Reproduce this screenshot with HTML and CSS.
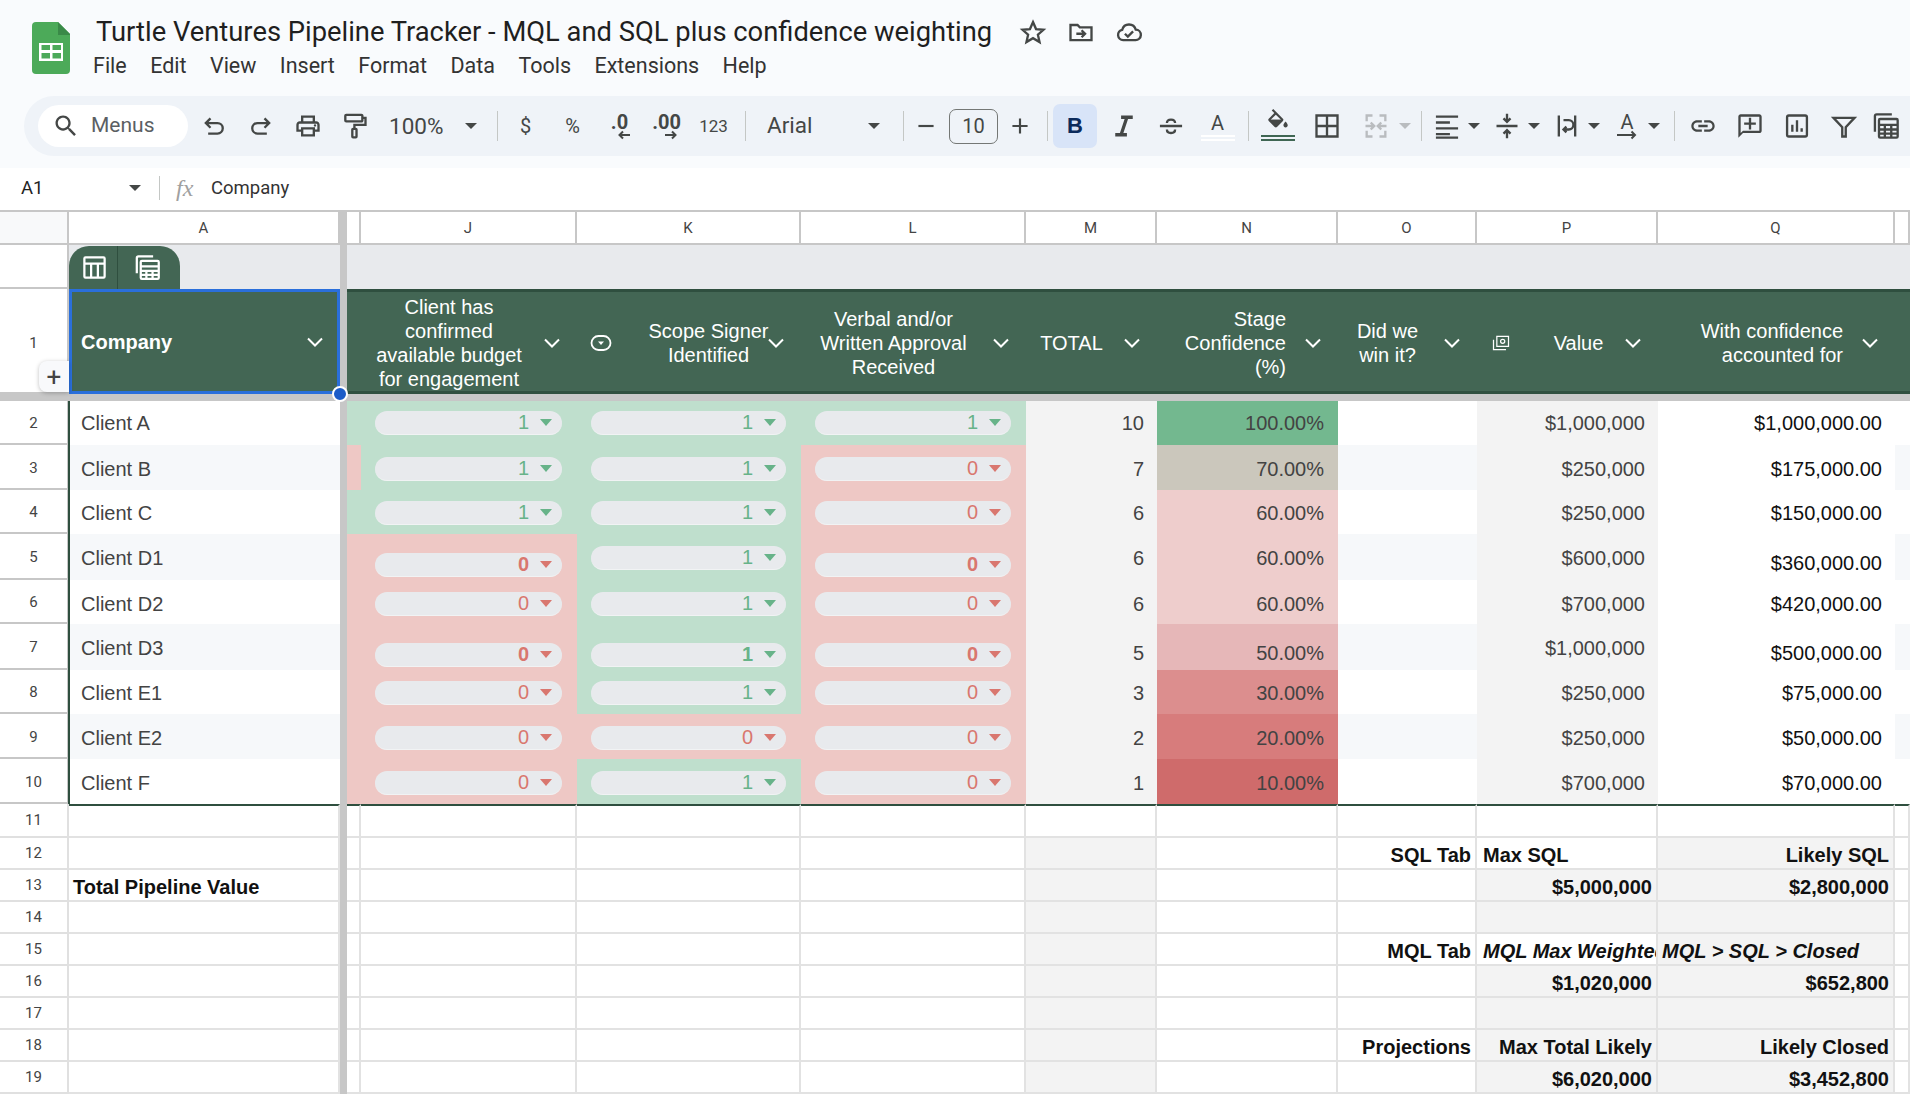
FILE: index.html
```html
<!DOCTYPE html>
<html lang="en">
<head>
<meta charset="utf-8">
<title>Turtle Ventures Pipeline Tracker</title>
<link rel="stylesheet" href="styles.css">
</head>
<body>
<header class="top">
  <div class="brand">
    <svg class="logo" viewBox="0 0 38 52"><path d="M4 0h22l12 12v36a4 4 0 0 1-4 4H4a4 4 0 0 1-4-4V4a4 4 0 0 1 4-4z" fill="#4caa59"/><path d="M26 0l12 12v1H26z" fill="#3a8a48"/><path d="M7 21h24v18H7zM9.500 23v5h8.500v-5zM20.500 23v5h8.500v-5zM9.500 31v5.500h8.500V31zM20.500 31v5.500h8.500V31z" fill="#fff" fill-rule="evenodd"/></svg>
    <div class="titles">
      <div class="titlerow">
        <span class="title">Turtle Ventures Pipeline Tracker - MQL and SQL plus confidence weighting</span>
        <svg class="ic st first" viewBox="0 0 24 24"><path d="M12 3.500l2.600 6 6.400.6-4.800 4.200 1.400 6.300L12 17.300l-5.600 3.300 1.400-6.300L3 10.100l6.400-.6z"/></svg>
        <svg class="ic st" viewBox="0 0 24 24"><path d="M3 6h6l2 2h10v11H3zM8 13.500h7M12.500 10.500l3 3-3 3"/></svg>
        <svg class="ic st" viewBox="0 0 24 24"><path d="M7 19a4.500 4.500 0 0 1-.8-8.900A6 6 0 0 1 17.800 10 4.500 4.500 0 0 1 17.500 19zM8.500 13.500l2.500 2.500 4.500-4.500"/></svg>
      </div>
      <nav class="menu"><span>File</span><span>Edit</span><span>View</span><span>Insert</span><span>Format</span><span>Data</span><span>Tools</span><span>Extensions</span><span>Help</span></nav>
    </div>
  </div>
  <div class="toolbar">
    <div class="search"><svg class="ic" viewBox="0 0 24 24"><path d="M15.500 14h-.79l-.28-.27C15.410 12.590 16 11.110 16 9.500 16 5.910 13.090 3 9.500 3S3 5.910 3 9.500 5.910 16 9.500 16c1.610 0 3.090-.59 4.230-1.570l.27.28v.79l5 4.990L20.490 19l-4.990-5zm-6 0C7.010 14 5 11.990 5 9.500S7.010 5 9.500 5 14 7.010 14 9.500 11.990 14 9.500 14z"/></svg><span>Menus</span></div>
    <div class="tb first-tb"><svg class="ic st" viewBox="0 0 24 24"><path d="M9 5.500L5 9.500l4 4M5.500 9.500H15a4.500 4.500 0 0 1 0 9H7"/></svg></div>
    <div class="tb"><svg class="ic st" viewBox="0 0 24 24"><path d="M15 5.500l4 4-4 4M18.500 9.500H9a4.500 4.500 0 0 0 0 9h8"/></svg></div>
    <div class="tb"><svg class="ic" viewBox="0 0 24 24"><path d="M19 8h-1V3H6v5H5c-1.660 0-3 1.340-3 3v6h4v4h12v-4h4v-6c0-1.660-1.340-3-3-3zM8 5h8v3H8V5zm8 12v2H8v-4h8v2zm2-2v-2H6v2H4v-4c0-.55.45-1 1-1h14c.55 0 1 .45 1 1v4h-2z"/><circle cx="18" cy="11.500" r="1"/></svg></div>
    <div class="tb"><svg class="ic st" viewBox="0 0 24 24"><path d="M4.500 2.500h13a.8.8 0 0 1 .8.8v3.900a.8.8 0 0 1-.8.8h-13a.8.8 0 0 1-.8-.8V3.300a.8.8 0 0 1 .8-.8zM18.300 5H21v6h-9.500v3.500M10.300 14.500h2.400a.6.6 0 0 1 .6.6v6a.6.6 0 0 1-.6.6h-2.400a.6.6 0 0 1-.6-.6v-6a.6.6 0 0 1 .6-.6z"/></svg></div>
    <div class="zoomsel"><span>100%</span><i class="car"></i></div>
    <i class="sep s-zoom"></i>
    <div class="tb txt t-first">$</div>
    <div class="tb txt">%</div>
    <div class="tb dec"><span>.0</span><svg class="arr" viewBox="0 0 14 10"><path d="M13 5H3M6 1.500L2.500 5 6 8.500"/></svg></div>
    <div class="tb dec"><span>.00</span><svg class="arr" viewBox="0 0 14 10"><path d="M1 5h10M8 1.500L11.500 5 8 8.500"/></svg></div>
    <div class="tb txt small">123</div>
    <i class="sep s-num"></i>
    <div class="fontsel"><span>Arial</span><i class="car"></i></div>
    <i class="sep"></i>
    <div class="step"><svg class="ic st" viewBox="0 0 24 24"><path d="M5 12h14"/></svg></div>
    <div class="fsize">10</div>
    <div class="step plus"><svg class="ic st" viewBox="0 0 24 24"><path d="M5 12h14M12 5v14"/></svg></div>
    <i class="sep s-plus"></i>
    <div class="bold">B</div>
    <div class="tb ital"><svg class="ic st thick" viewBox="0 0 24 24"><path d="M9.500 4.500h10M4.500 19.500h10M14.500 4.500l-5 15"/></svg></div>
    <div class="tb"><svg class="ic st" viewBox="0 0 24 24"><path d="M2.500 12h19M8.500 9.500c0-2 1.500-3 3.500-3s3.500 1 3.500 3M8.500 15c0 2 1.500 3 3.500 3s3.500-1 3.500-3"/></svg></div>
    <div class="tb letter"><span>A</span><i class="uline"></i></div>
    <i class="sep s-a"></i>
    <div class="tb fill"><svg class="ic" viewBox="0 0 24 24"><path d="M16.560 8.940L7.620 0 6.210 1.410l2.380 2.380-5.150 5.150c-.59.59-.59 1.540 0 2.120l5.500 5.500c.29.29.68.44 1.060.44s.77-.15 1.060-.44l5.500-5.500c.59-.58.59-1.530 0-2.120zM5.210 10L10 5.210 14.790 10H5.210zM19 11.500s-2 2.170-2 3.500c0 1.100.9 2 2 2s2-.9 2-2c0-1.330-2-3.500-2-3.500z"/><path d="M5 10h10l-5 5z"/></svg><i class="uline dark"></i></div>
    <div class="tb borders"><svg class="ic st" viewBox="0 0 24 24"><path d="M3 3h18v18H3zM12 3v18M3 12h18"/></svg></div>
    <div class="merge"><svg class="ic st off" viewBox="0 0 24 24"><path d="M9 3H4v5M4 12v0M4 16v5h5M15 3h5v5M20 16v5h-5M3 12h7M7.500 9l3 3-3 3M21 12h-7M16.500 9l-3 3 3 3"/></svg><i class="car off-car"></i></div>
    <i class="sep s-merge"></i>
    <div class="dd d-first"><svg class="ic st" viewBox="0 0 24 24"><path d="M2.500 4h19M2.500 9h12M2.500 14h19M2.500 19h12M2.500 22h19"/></svg><i class="car"></i></div>
    <div class="dd"><svg class="ic st" viewBox="0 0 24 24"><path d="M3 12h18M12 1.500v7M9 5.500l3 3 3-3M12 22.500v-7M9 18.500l3-3 3 3"/></svg><i class="car"></i></div>
    <div class="dd"><svg class="ic st" viewBox="0 0 24 24"><path d="M5 3v18M19 3v18M9 7h4.500a3 3 0 0 1 0 8H9M11.500 12.500L9 15l2.500 2.500"/></svg><i class="car"></i></div>
    <div class="dd rot"><span class="rota">A</span><svg class="arrow-rot" viewBox="0 0 20 10"><path d="M0 5h18M14.500 1.500L18 5l-3.500 3.500"/></svg><i class="car"></i></div>
    <i class="sep s-rot"></i>
    <div class="tb t-link"><svg class="ic" viewBox="0 0 24 24"><path d="M3.900 12c0-1.710 1.390-3.100 3.100-3.100h4V7H7c-2.760 0-5 2.240-5 5s2.240 5 5 5h4v-1.900H7c-1.710 0-3.100-1.390-3.100-3.100zM8 13h8v-2H8v2zm9-6h-4v1.900h4c1.710 0 3.100 1.390 3.100 3.100s-1.390 3.100-3.100 3.100h-4V17h4c2.760 0 5-2.240 5-5s-2.240-5-5-5z"/></svg></div>
    <div class="tb"><svg class="ic" viewBox="0 0 24 24"><path d="M20 2H4c-1.100 0-2 .9-2 2v18l4-4h14c1.100 0 2-.9 2-2V4c0-1.100-.9-2-2-2zm0 14H6l-2 2V4h16v12z"/><path d="M11 5h2v4h4v2h-4v4h-2v-4H7V9h4z"/></svg></div>
    <div class="tb"><svg class="ic st" viewBox="0 0 24 24"><path d="M5 3h14a1.500 1.500 0 0 1 1.500 1.500v15A1.500 1.500 0 0 1 19 21H5a1.500 1.500 0 0 1-1.500-1.500v-15A1.500 1.500 0 0 1 5 3zM8 17v-6M12 17V7M16 17v-3"/></svg></div>
    <div class="tb"><svg class="ic st" viewBox="0 0 24 24"><path d="M3 5h18l-7.500 8v8h-3v-8z"/></svg></div>
    <div class="tb t-last"><svg class="ic st" viewBox="0 0 24 24"><path d="M2.500 17V3.500a1.500 1.500 0 0 1 1.500-1.500h13M7 6h14a1 1 0 0 1 1 1v14a1 1 0 0 1-1 1H7a1 1 0 0 1-1-1V7a1 1 0 0 1 1-1zM6 11h16M6 15h16M6 18.500h16M11 11v11M16.500 11v11"/></svg></div>
  </div>
</header>
<div class="formula">
  <span class="cellref">A1</span><i class="car"></i><i class="fsep"></i><span class="fx">fx</span><span class="ftext">Company</span>
</div>
<main class="sheet">
  <div class="row r-col">
    <div class="corner"></div><div class="ch">A</div><div class="fz"></div><div class="ch"></div><div class="ch">J</div><div class="ch">K</div><div class="ch">L</div><div class="ch">M</div><div class="ch">N</div><div class="ch">O</div><div class="ch">P</div><div class="ch">Q</div><div class="ch"></div>
  </div>
  <div class="row r-tab">
    <div class="rn"></div>
    <div class="tabcell"><div class="tabs">
      <span class="tabb"><svg class="tic" viewBox="0 0 24 24"><path d="M4 3h16a1 1 0 0 1 1 1v16a1 1 0 0 1-1 1H4a1 1 0 0 1-1-1V4a1 1 0 0 1 1-1zM3 8.500h18M9 8.500V21M15 8.500V21"/></svg></span>
      <span class="tabb second"><svg class="tic" viewBox="0 0 24 24"><path d="M2.500 17V3.500a1.500 1.500 0 0 1 1.500-1.500h13M7 6h14a1 1 0 0 1 1 1v14a1 1 0 0 1-1 1H7a1 1 0 0 1-1-1V7a1 1 0 0 1 1-1zM6 11h16M6 15h16M6 18.500h16M11 15v7M16.500 15v7"/></svg></span>
    </div></div>
    <div class="fz"></div><div class="tabfill sp"></div>
  </div>
  <div class="row r-head">
    <div class="rn">1</div>
    <div class="hc sel">
      <span class="lb company">Company</span><svg class="chev" viewBox="0 0 24 24"><path d="M5 8.500l7 7 7-7"/></svg>
      <button class="addrow" type="button">+</button><i class="seldot"></i>
    </div>
    <div class="fz"></div>
    <div class="hc"></div>
    <div class="hc"><span class="lb">Client has<br>confirmed<br>available budget<br>for engagement</span><svg class="chev" viewBox="0 0 24 24"><path d="M5 8.500l7 7 7-7"/></svg></div>
    <div class="hc"><svg class="hic" viewBox="0 0 24 24"><rect x="2.500" y="5" width="19" height="14" rx="7"/><path class="sol" d="M9 10.500h6L12 14z"/></svg><span class="lb scope">Scope Signer<br>Identified</span><svg class="chev" viewBox="0 0 24 24"><path d="M5 8.500l7 7 7-7"/></svg></div>
    <div class="hc"><span class="lb">Verbal and/or<br>Written Approval<br>Received</span><svg class="chev" viewBox="0 0 24 24"><path d="M5 8.500l7 7 7-7"/></svg></div>
    <div class="hc"><span class="lb">TOTAL</span><svg class="chev" viewBox="0 0 24 24"><path d="M5 8.500l7 7 7-7"/></svg></div>
    <div class="hc"><span class="lb right">Stage<br>Confidence<br>(%)</span><svg class="chev" viewBox="0 0 24 24"><path d="M5 8.500l7 7 7-7"/></svg></div>
    <div class="hc"><span class="lb">Did we<br>win it?</span><svg class="chev" viewBox="0 0 24 24"><path d="M5 8.500l7 7 7-7"/></svg></div>
    <div class="hc"><svg class="hic cash" viewBox="0 0 24 24"><path d="M7 4h14v12H7zM3 8v12h15"/><circle cx="14" cy="10" r="2.500"/></svg><span class="lb val">Value</span><svg class="chev" viewBox="0 0 24 24"><path d="M5 8.500l7 7 7-7"/></svg></div>
    <div class="hc"><span class="lb right">With confidence<br>accounted for</span><svg class="chev" viewBox="0 0 24 24"><path d="M5 8.500l7 7 7-7"/></svg></div>
    <div class="hc"></div>
  </div>
  <div class="hbar"></div>

  <div class="row h44 t0"><div class="rn">2</div><div class="a">Client A</div><div class="fz"></div><div class="gr"></div>
    <div class="p gr"><div class="pill u1"><span>1</span><i></i></div></div><div class="p gr"><div class="pill u1"><span>1</span><i></i></div></div><div class="p gr"><div class="pill u1"><span>1</span><i></i></div></div>
    <div class="n gm">10</div><div class="n" style="background:#73b88f">100.00%</div><div class="o"></div><div class="n gm">$1,000,000</div><div class="n q">$1,000,000.00</div><div class="o"></div></div>
  <div class="row h45 t4"><div class="rn">3</div><div class="a z">Client B</div><div class="fz"></div><div class="rd"></div>
    <div class="p gr"><div class="pill d1"><span>1</span><i></i></div></div><div class="p gr"><div class="pill d1"><span>1</span><i></i></div></div><div class="p rd"><div class="pill d1"><span>0</span><i></i></div></div>
    <div class="n gm">7</div><div class="n" style="background:#cbc7bc">70.00%</div><div class="o z"></div><div class="n gm">$250,000</div><div class="n q">$175,000.00</div><div class="o z"></div></div>
  <div class="row h44"><div class="rn">4</div><div class="a">Client C</div><div class="fz"></div><div class="gr"></div>
    <div class="p gr"><div class="pill"><span>1</span><i></i></div></div><div class="p gr"><div class="pill"><span>1</span><i></i></div></div><div class="p rd"><div class="pill"><span>0</span><i></i></div></div>
    <div class="n gm">6</div><div class="n" style="background:#eecdcc">60.00%</div><div class="o"></div><div class="n gm">$250,000</div><div class="n q">$150,000.00</div><div class="o"></div></div>
  <div class="row h46"><div class="rn">5</div><div class="a z">Client D1</div><div class="fz"></div><div class="rd"></div>
    <div class="p rd"><div class="pill low strong"><span>0</span><i></i></div></div><div class="p gr"><div class="pill"><span>1</span><i></i></div></div><div class="p rd"><div class="pill low strong"><span>0</span><i></i></div></div>
    <div class="n gm">6</div><div class="n" style="background:#eecdcc">60.00%</div><div class="o z"></div><div class="n gm">$600,000</div><div class="n q lowt">$360,000.00</div><div class="o z"></div></div>
  <div class="row h44 t4"><div class="rn">6</div><div class="a">Client D2</div><div class="fz"></div><div class="rd"></div>
    <div class="p rd"><div class="pill d2"><span>0</span><i></i></div></div><div class="p gr"><div class="pill d2"><span>1</span><i></i></div></div><div class="p rd"><div class="pill d2"><span>0</span><i></i></div></div>
    <div class="n gm">6</div><div class="n" style="background:#eecdcc">60.00%</div><div class="o"></div><div class="n gm">$700,000</div><div class="n q">$420,000.00</div><div class="o"></div></div>
  <div class="row h46"><div class="rn">7</div><div class="a z">Client D3</div><div class="fz"></div><div class="rd"></div>
    <div class="p rd"><div class="pill low strong"><span>0</span><i></i></div></div><div class="p gr"><div class="pill low strong"><span>1</span><i></i></div></div><div class="p rd"><div class="pill low strong"><span>0</span><i></i></div></div>
    <div class="n gm lowt">5</div><div class="n lowt" style="background:#e6b7b8">50.00%</div><div class="o z"></div><div class="n gm">$1,000,000</div><div class="n q lowt">$500,000.00</div><div class="o z"></div></div>
  <div class="row h44"><div class="rn">8</div><div class="a">Client E1</div><div class="fz"></div><div class="rd"></div>
    <div class="p rd"><div class="pill"><span>0</span><i></i></div></div><div class="p gr"><div class="pill"><span>1</span><i></i></div></div><div class="p rd"><div class="pill"><span>0</span><i></i></div></div>
    <div class="n gm">3</div><div class="n" style="background:#dc8e8e">30.00%</div><div class="o"></div><div class="n gm">$250,000</div><div class="n q">$75,000.00</div><div class="o"></div></div>
  <div class="row h45 t4"><div class="rn">9</div><div class="a z">Client E2</div><div class="fz"></div><div class="rd"></div>
    <div class="p rd"><div class="pill"><span>0</span><i></i></div></div><div class="p rd"><div class="pill"><span>0</span><i></i></div></div><div class="p rd"><div class="pill"><span>0</span><i></i></div></div>
    <div class="n gm">2</div><div class="n" style="background:#d77c7c">20.00%</div><div class="o z"></div><div class="n gm">$250,000</div><div class="n q">$50,000.00</div><div class="o z"></div></div>
  <div class="row h45 t4"><div class="rn">10</div><div class="a">Client F</div><div class="fz"></div><div class="rd"></div>
    <div class="p rd"><div class="pill"><span>0</span><i></i></div></div><div class="p gr"><div class="pill"><span>1</span><i></i></div></div><div class="p rd"><div class="pill"><span>0</span><i></i></div></div>
    <div class="n gm">1</div><div class="n" style="background:#cf6b6b">10.00%</div><div class="o"></div><div class="n gm">$700,000</div><div class="n q">$70,000.00</div><div class="o"></div></div>

  <div class="row g first"><div class="rn">11</div><div class="c"></div><div class="fz"></div><div class="c"></div><div class="c"></div><div class="c"></div><div class="c"></div><div class="c"></div><div class="c"></div><div class="c"></div><div class="c"></div><div class="c"></div><div class="c"></div></div>
  <div class="row g"><div class="rn">12</div><div class="c"></div><div class="fz"></div><div class="c"></div><div class="c"></div><div class="c"></div><div class="c"></div><div class="c gm"></div><div class="c"></div><div class="c rt">SQL Tab</div><div class="c in">Max SQL</div><div class="c rt gm">Likely SQL</div><div class="c"></div></div>
  <div class="row g"><div class="rn">13</div><div class="c">Total Pipeline Value</div><div class="fz"></div><div class="c"></div><div class="c"></div><div class="c"></div><div class="c"></div><div class="c gm"></div><div class="c"></div><div class="c"></div><div class="c rt gm">$5,000,000</div><div class="c rt gm">$2,800,000</div><div class="c"></div></div>
  <div class="row g"><div class="rn">14</div><div class="c"></div><div class="fz"></div><div class="c"></div><div class="c"></div><div class="c"></div><div class="c"></div><div class="c gm"></div><div class="c"></div><div class="c"></div><div class="c gm"></div><div class="c gm"></div><div class="c"></div></div>
  <div class="row g"><div class="rn">15</div><div class="c"></div><div class="fz"></div><div class="c"></div><div class="c"></div><div class="c"></div><div class="c"></div><div class="c gm"></div><div class="c"></div><div class="c rt">MQL Tab</div><div class="c em in">MQL Max Weighted</div><div class="c em gm">MQL &gt; SQL &gt; Closed</div><div class="c"></div></div>
  <div class="row g"><div class="rn">16</div><div class="c"></div><div class="fz"></div><div class="c"></div><div class="c"></div><div class="c"></div><div class="c"></div><div class="c gm"></div><div class="c"></div><div class="c"></div><div class="c rt gm">$1,020,000</div><div class="c rt gm">$652,800</div><div class="c"></div></div>
  <div class="row g"><div class="rn">17</div><div class="c"></div><div class="fz"></div><div class="c"></div><div class="c"></div><div class="c"></div><div class="c"></div><div class="c gm"></div><div class="c"></div><div class="c"></div><div class="c gm"></div><div class="c gm"></div><div class="c"></div></div>
  <div class="row g"><div class="rn">18</div><div class="c"></div><div class="fz"></div><div class="c"></div><div class="c"></div><div class="c"></div><div class="c"></div><div class="c gm"></div><div class="c"></div><div class="c rt">Projections</div><div class="c rt gm">Max Total Likely</div><div class="c rt gm">Likely Closed</div><div class="c"></div></div>
  <div class="row g"><div class="rn">19</div><div class="c"></div><div class="fz"></div><div class="c"></div><div class="c"></div><div class="c"></div><div class="c"></div><div class="c gm"></div><div class="c"></div><div class="c"></div><div class="c rt gm">$6,020,000</div><div class="c rt gm">$3,452,800</div><div class="c"></div></div>
</main>
</body>
</html>
```
FILE: styles.css
```css
* { box-sizing: border-box; }
html, body { margin: 0; padding: 0; height: 1094px; overflow: hidden; background: #fff; }
body { font-family: Roboto, "Liberation Sans", sans-serif; color: #444746; }
i { font-style: normal; display: block; }

.top { height: 168px; background: #f9fbfd; overflow: hidden; }
.brand { height: 96px; display: flex; align-items: flex-start; padding: 22px 0 0 32px; }
.logo { width: 38px; height: 52px; flex: none; }
.titles { margin: -9px 0 0 26px; }
.titlerow { display: flex; align-items: center; height: 38px; }
.title { font-size: 27.350px; color: #1f1f1f; white-space: nowrap; letter-spacing: 0; }
.ic { width: 28px; height: 28px; fill: #444746; flex: none; }
.st { fill: none; stroke: #444746; stroke-width: 2; }
.thick { stroke-width: 2.800; }
.titlerow .ic { margin-left: 20px; }
.titlerow .first { margin-left: 27px; }
.menu { display: flex; gap: 23.400px; height: 28px; line-height: 28px; font-size: 21.500px; color: #333; margin: 1px 0 0 -3px; }

.toolbar { display: flex; align-items: center; height: 60px; margin-left: 24px; padding-left: 14px; background: #eff3f8; border-radius: 30px 0 0 30px; white-space: nowrap; }
.search { width: 150px; height: 42px; border-radius: 21px; background: #fff; display: flex; align-items: center; padding-left: 14px; font-size: 21px; color: #5b5f63; flex: none; }
.search .ic { margin-right: 11px; }
.search span, .fontsel span { margin-bottom: 2px; }
.tb { width: 47px; height: 44px; display: flex; align-items: center; justify-content: center; flex: none; }
.first-tb { margin-left: 2px; }
.zoomsel { width: 108px; padding-left: 11px; display: flex; align-items: center; justify-content: space-between; padding-right: 9px; font-size: 22.500px; color: #444746; flex: none; }
.car { width: 0; height: 0; border-left: 6px solid transparent; border-right: 6px solid transparent; border-top: 6px solid #444746; flex: none; }
.sep { width: 1px; height: 30px; background: #c4c7c5; flex: none; }
.s-zoom { margin-left: 11px; }
.t-first { margin-left: 4px; }
.txt { font-size: 20px; color: #444746; }
.small { font-size: 17px; }
.dec { flex-direction: column; font-size: 20px; font-weight: 700; line-height: 20px; color: #444746; }
.arr { width: 14px; height: 10px; fill: none; stroke: #444746; stroke-width: 2; margin: -2px 0 0 8px; }
.s-num { margin-left: 8px; }
.fontsel { width: 157px; display: flex; align-items: center; justify-content: space-between; padding: 0 23px 0 21px; font-size: 22.500px; color: #444746; flex: none; }
.step { width: 44px; display: flex; justify-content: center; flex: none; }
.step .ic { width: 26px; height: 26px; }
.fsize { width: 49px; height: 35px; margin-left: 1px; border: 1px solid #747775; border-radius: 7px; display: flex; align-items: center; justify-content: center; font-size: 20px; flex: none; }
.plus { width: 42px; margin-left: 1px; }
.s-plus { margin-left: 6px; }
.bold { width: 44px; height: 44px; margin-left: 5px; border-radius: 7px; background: #d8e4f8; color: #0b2a5b; font: 700 22px "Liberation Sans", sans-serif; display: flex; align-items: center; justify-content: center; flex: none; }
.ital { margin-left: 3px; }
.letter { flex-direction: column; font-size: 20px; line-height: 22px; color: #444746; }
.uline { width: 34px; height: 6px; border-top: 2px solid #fff; border-bottom: 2px solid #fff; margin-top: 1px; }
.s-a { margin-left: 7px; }
.fill { margin-left: 5px; flex-direction: column; }
.fill .ic { width: 26px; height: 26px; margin-top: -2px; }
.uline.dark { border-color: #3f6653; margin-top: 0; }
.borders { margin-left: 2px; }
.merge { width: 66px; display: flex; align-items: center; gap: 9px; padding-left: 12px; flex: none; }
.off { stroke: #b9bcbf; }
.off-car { border-top-color: #b9bcbf; }
.s-merge { margin-left: 5px; }
.dd { width: 60px; display: flex; align-items: center; gap: 7px; padding-left: 6px; flex: none; }
.d-first { margin-left: 5px; }
.rot { position: relative; }
.rota { width: 28px; text-align: center; font-size: 20px; line-height: 28px; color: #444746; margin-top: -8px; }
.arrow-rot { position: absolute; left: 10px; top: 14px; width: 20px; height: 10px; fill: none; stroke: #444746; stroke-width: 2; }
.s-rot { margin-left: 7px; }
.t-link { margin-left: 4px; }
.t-last { margin-left: -5px; }

.formula { height: 42px; background: #fff; display: flex; align-items: center; font-size: 18.500px; color: #333; padding-bottom: 2px; }
.cellref { width: 129px; padding-left: 21px; color: #1f1f1f; }
.fsep { width: 1px; height: 24px; background: #c4c7c5; margin-left: 18px; }
.fx { width: 51px; padding-left: 16px; font: italic 24px "Liberation Serif", serif; color: #a0a0a0; }
.ftext { color: #333; }

.sheet { font-family: "Liberation Sans", Arial, sans-serif; }
.row { display: grid; grid-template-columns: 69px 271px 7px 14px 216px 224px 225px 131px 181px 139px 181px 237px 15px; }
.fz { background: #c7c7c7; }
.r-col { height: 35px; }
.corner { background: #f8f9fa; border: solid #c7c7c7; border-width: 2px 2px 2px 0; }
.ch { background: #fff; border: solid #c7c7c7; border-width: 2px 2px 2px 0; display: flex; align-items: center; justify-content: center; font: 15px Roboto, sans-serif; color: #444; }
.r-tab { height: 44px; background: #e8eaed; }
.rn { background: #fff; border-bottom: 2px solid #c7c7c7; border-right: 2px solid #c7c7c7; display: flex; align-items: center; justify-content: center; padding-top: 2px; font: 15px Roboto, sans-serif; color: #444; }
.r-head .rn { padding-top: 4px; }
.tabcell { background: #e8eaed; display: flex; align-items: flex-end; }
.tabs { display: flex; width: 111px; height: 43px; background: #436654; border-radius: 20px 20px 0 0; }
.tabb { width: 49px; display: flex; align-items: center; justify-content: center; border-right: 1px solid #2f4f3f; padding-left: 3px; }
.tabb.second { width: 62px; border: 0; padding: 0 4px 0 0; }
.tic { width: 27px; height: 27px; fill: none; stroke: #fff; stroke-width: 2; }
.tabfill { grid-column: 4 / -1; background: #e8eaed; }

.r-head { height: 104px; }
.hc { background: #436654; border: solid #2f4f3f; border-width: 3px 0; display: flex; align-items: center; padding: 3px 13px 0 0; color: #fff; font-size: 20px; line-height: 24px; position: relative; white-space: nowrap; }
.lb { flex: 1; text-align: center; padding-right: 3px; }
.lb.right { text-align: right; padding-right: 15px; }
.lb.scope { flex: none; width: 121px; margin: 0 -5px 0 35px; padding: 0; }
.lb.val { padding-left: 28px; }
.lb.company { text-align: left; font-weight: 700; padding-left: 9px; }
.chev { width: 24px; height: 24px; flex: none; fill: none; stroke: #fff; stroke-width: 2; }
.hic { width: 24px; height: 24px; flex: none; margin-left: 12px; fill: none; stroke: #fff; stroke-width: 1.800; }
.hic.cash { width: 20px; height: 20px; margin-left: 14px; stroke-width: 1.500; }
.hic .sol { fill: #fff; stroke: none; }
.sel { border: 3px solid #2a6fdb; padding: 1px 10px 0 0; }
.addrow { position: absolute; left: -33px; top: 69px; width: 30px; height: 31px; border: 0; padding: 0; background: #f8f9fb; border-radius: 8px 0 0 8px; box-shadow: 0 1px 4px rgba(0,0,0,.25); font: 26px/30px Roboto, sans-serif; color: #444; }
.seldot { position: absolute; right: -11px; bottom: -11px; width: 16px; height: 16px; border-radius: 50%; background: #1c5cc8; border: 2px solid #fff; z-index: 3; }
.hbar { height: 8px; background: #c7c7c7; }

.h44 { height: 44px; } .h45 { height: 45px; } .h46 { height: 46px; }
.a { margin-left: -1px; border-left: 2px solid #2f4f3f; padding: 2px 0 0 11px; display: flex; align-items: center; font-size: 20px; color: #434343; background: #fff; }
.z { background: #f6f8fa; }
.o { background: #fff; }
.o.z { background: #f6f8fa; }
.gr { background: #bfdfcd; }
.rd { background: #eec8c5; }
.gm { background: #f3f3f3; }
.n { display: flex; align-items: center; justify-content: flex-end; padding: 2px 14px 0 0; font-size: 20px; color: #434343; }
.n.gm { padding-right: 13px; }
.q { color: #111; padding-right: 13px; }
.n.lowt { padding-top: 13px; }
.t0 .a, .t0 .n { padding-top: 0; }
.t4 .a, .t4 .n { padding-top: 4px; }
.p { display: flex; align-items: center; padding: 0 15px 0 14px; }
.pill { width: 100%; height: 24px; margin-top: 2px; border-radius: 12px; background: #e8eaed; border-bottom: 1px solid #f1f3f4; display: flex; align-items: center; justify-content: flex-end; gap: 11px; padding-right: 10px; font-size: 20px; }
.pill i { width: 0; height: 0; border-left: 6px solid transparent; border-right: 6px solid transparent; flex: none; }
.gr .pill span { color: #67b389; }
.gr .pill i { border-top: 7px solid #67b389; }
.rd .pill span { color: #d9776f; }
.rd .pill i { border-top: 7px solid #d9776f; }
.pill.u1 { margin-top: 0; }
.pill.d1 { margin-top: 3px; }
.pill.d2 { margin-top: 4px; }
.pill.low { margin-top: 15px; }
.strong span { font-weight: 700; }

.g { height: 32px; }
.g.first { height: 34px; }
.g.first .c { border-top: 2px solid #2f4f3f; }
.g .rn { border-bottom-color: #e0e0e0; border-right-color: #e0e0e0; padding-top: 0; }
.c { border: solid #e2e2e2; border-width: 0 2px 2px 0; padding: 2px 4px 0 4px; font-size: 20px; line-height: 30px; font-weight: 700; color: #111; white-space: nowrap; overflow: hidden; }
.c.in { padding-left: 6px; }
.rt { text-align: right; }
.em { font-style: italic; }
```
